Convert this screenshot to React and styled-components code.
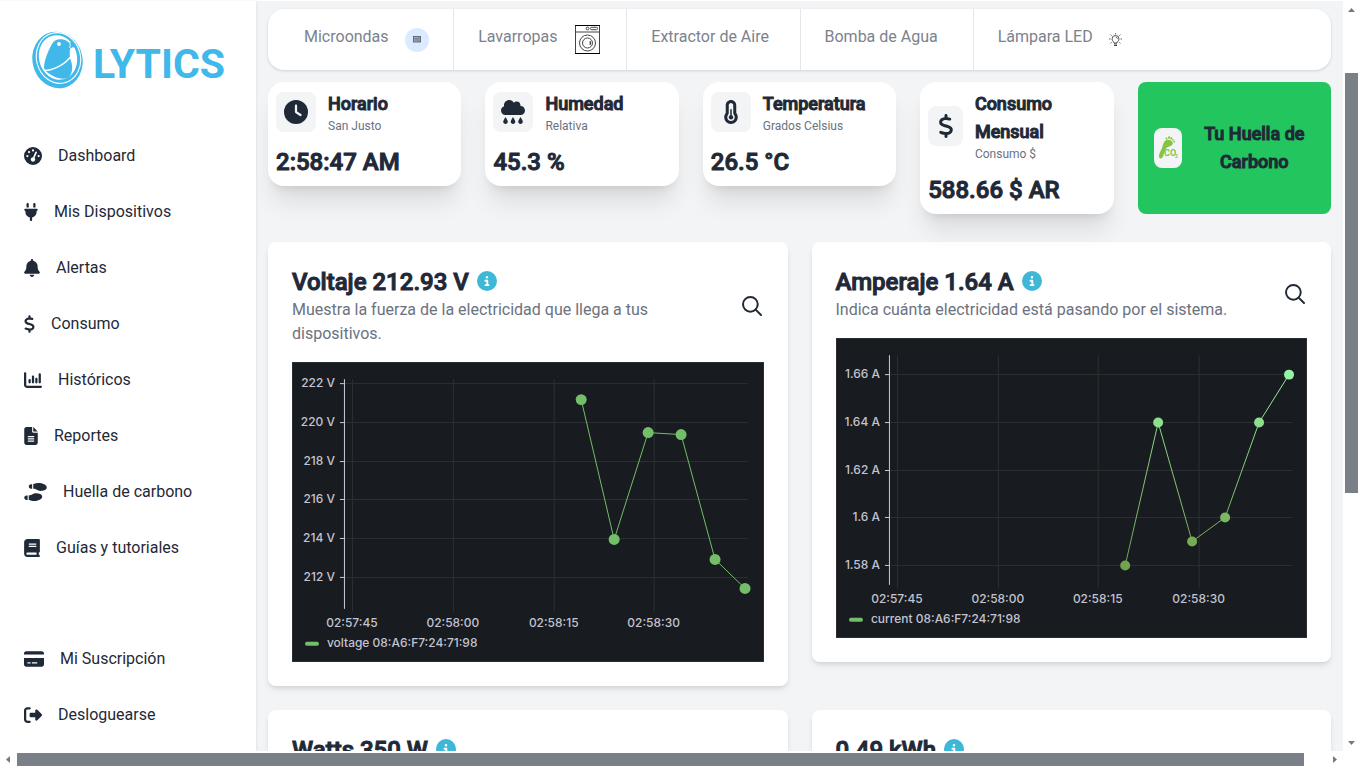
import React from "react";
import styled, { createGlobalStyle, css } from "styled-components";
import {
  FaGaugeHigh,
  FaPlug,
  FaBell,
  FaDollarSign,
  FaChartColumn,
  FaFileLines,
  FaShoePrints,
  FaBook,
  FaCreditCard,
  FaRightFromBracket,
  FaClock,
  FaCloudRain,
  FaTemperatureHalf,
  FaCircleInfo,
} from "react-icons/fa6";
import { IoSearchOutline } from "react-icons/io5";

const ink = "#1f2937";
const muted = "#6b7280";
const surface = "#f3f4f6";
const brand = "#40b8ea";

const GlobalStyle = createGlobalStyle`
  *, *::before, *::after { box-sizing: border-box; }
  body {
    margin: 0;
    background: #fff;
    color: ${ink};
    font: 400 16px/24px Roboto, "Liberation Sans", sans-serif;
  }
  h2, h3, p, ul { margin: 0; padding: 0; }
  ul { list-style: none; }
  svg { display: block; flex: none; }
  button { border: 0; padding: 0; background: none; color: inherit; font: inherit; cursor: pointer; }
  a { color: inherit; text-decoration: none; }
`;

/* Medium letters thickened by an outline, so that widths stay those of the medium face. */
const heavy = css`
  font-weight: 500;
  -webkit-text-stroke: 1px currentColor;
`;

const Shell = styled.div`
  display: grid;
  grid-template-columns: 256px minmax(0, 1fr) 17px;
  grid-template-rows: minmax(0, 1fr) 17px;
  height: 100vh;
  padding-top: 1px;
  overflow: hidden;
`;

/* Sidebar */

const Sidebar = styled.aside`
  display: flex;
  flex-direction: column;
  background: #fff;
  box-shadow: 0 1px 3px rgba(0, 0, 0, 0.12);
  z-index: 1;
  padding-bottom: 8px;
`;

const Brand = styled.a`
  display: flex;
  align-items: center;
  gap: 9px;
  height: 127px;
  padding: 0 32px 10px;
`;

const Wordmark = styled.span`
  color: ${brand};
  font: 700 41px/48px Roboto, sans-serif;
  padding-top: 8px;
`;

const Menu = styled.ul`
  ${({ $grow }) => $grow && css`flex: 1;`}
`;

const MenuLink = styled.a`
  display: flex;
  align-items: center;
  gap: 16px;
  height: 56px;
  padding: 0 24px;

  svg {
    width: ${({ $icon }) => $icon}px;
    height: 18px;
  }
`;

/* Main area */

const Main = styled.main`
  overflow: hidden;
  padding: 8px 12px 0;
  background: ${surface};
`;

const DeviceBar = styled.nav`
  display: grid;
  grid-template-columns: repeat(6, minmax(0, 1fr));
  height: 61px;
  padding: 0 12px;
  border-radius: 16px;
  background: #fff;
  box-shadow: 0 1px 3px rgba(0, 0, 0, 0.15);
`;

const Device = styled.a`
  display: flex;
  align-items: center;
  gap: 16px;
  padding-left: 24px;
  color: #7c828d;
  white-space: nowrap;

  & + & {
    border-left: 1px solid #e5e7eb;
  }

  span {
    padding-bottom: 6px;
  }
`;

const RoundBadge = styled.i`
  display: grid;
  place-items: center;
  width: 24px;
  height: 24px;
  border-radius: 50%;
  background: #dbeafe;
`;

const Stats = styled.section`
  display: grid;
  grid-template-columns: repeat(5, minmax(0, 1fr));
  align-items: start;
  gap: 24px;
  margin: 12px 0 28px;
  position: relative;
  z-index: 1;
`;

const StatCard = styled.article`
  padding: 8px;
  border-radius: 16px;
  background: #fff;
  box-shadow: 0 20px 25px -5px rgba(0, 0, 0, 0.1), 0 8px 10px -6px rgba(0, 0, 0, 0.1);
`;

const StatHead = styled.header`
  display: flex;
  align-items: center;
  gap: 12px;
`;

const IconTile = styled.div`
  display: flex;
  align-items: center;
  justify-content: center;
  flex: ${({ $narrow }) => ($narrow ? "none" : "0 1 40px")};
  width: ${({ $narrow }) => ($narrow ? 28 : 40)}px;
  min-width: 0;
  height: 40px;
  border-radius: 8px;
  background: ${surface};

  > svg {
    width: auto;
    height: 24px;
  }
`;

const StatTitle = styled.h3`
  ${heavy}
  font-size: 18px;
  line-height: 28px;
`;

const StatNote = styled.p`
  color: ${muted};
  font-size: 12px;
  line-height: 16px;
`;

const StatValue = styled.p`
  ${heavy}
  margin-top: 12px;
  font-size: 24px;
  line-height: 32px;
`;

const FootprintButton = styled.button`
  display: flex;
  align-items: center;
  align-self: stretch;
  gap: 12px;
  && {
    padding: 0 16px;
  }
  border-radius: 8px;
  background: #22c55e;

  span {
    ${heavy}
    flex: 1;
    font-size: 18px;
    line-height: 28px;
  }
`;

const Panels = styled.section`
  display: grid;
  grid-template-columns: repeat(2, minmax(0, 1fr));
  align-items: start;
  gap: 24px;
`;

const Panel = styled.article`
  padding: 24px;
  border-radius: 8px;
  background: #fff;
  box-shadow: 0 4px 6px -1px rgba(0, 0, 0, 0.1), 0 2px 4px -2px rgba(0, 0, 0, 0.1);
`;

const PanelHead = styled.header`
  display: flex;
  align-items: center;
  justify-content: space-between;
  margin-bottom: 16px;
`;

const PanelTitle = styled.h2`
  ${heavy}
  display: flex;
  align-items: center;
  gap: 8px;
  font-size: 24px;
  line-height: 32px;
`;

const InfoButton = styled.button`
  && {
    padding-bottom: 2px;
    color: #3fb8d8;
    font-size: 20px;
  }
`;

const PanelNote = styled.p`
  color: ${muted};
`;

const ZoomButton = styled.button`
  && {
    font-size: 24px;
  }

  path {
    stroke-width: 42px;
  }
`;

const ChartFrame = styled.svg`
  width: 100%;
  height: 300px;
  background: #181b1f;
  border: 1px solid #2a2d31;

  text {
    fill: #c3c3d2;
    font: 500 12px Inter, sans-serif;
  }
`;

/* Scroll bars */

const Track = styled.div`
  display: flex;
  align-items: center;
  justify-content: space-between;
  background: #fff;
  z-index: 2;
  ${({ $vertical }) =>
    $vertical
      ? css`
          flex-direction: column;
          padding: 6px 2px;
        `
      : css`
          grid-column: 1 / -1;
          padding: 2px 23px 2px 5px;
        `}
`;

const Rail = styled.div`
  display: flex;
  flex: 1;
  align-self: stretch;
  ${({ $vertical }) =>
    $vertical
      ? css`
          flex-direction: column;
          padding: 61px 0 0;
        `
      : css`
          padding: 0 28px 0 7px;
        `}
`;

const Thumb = styled.div`
  flex: 0 0 ${({ $size }) => $size};
  background: #7a8087;
`;

const arrows = {
  up: "M0 5L3.5 1L7 5Z",
  down: "M0 1L3.5 5L7 1Z",
  left: "M5 0L1 3.5L5 7Z",
  right: "M1 0L5 3.5L1 7Z",
};

function Arrow({ dir }) {
  const vertical = dir === "up" || dir === "down";
  return (
    <svg width={vertical ? 7 : 5} height={vertical ? 5 : 7} aria-hidden="true">
      <path d={arrows[dir]} fill="#747a85" />
    </svg>
  );
}

/* Drawings */

function BirdLogo() {
  return (
    <svg width="52" height="58" viewBox="0 0 52 58" aria-hidden="true">
      <ellipse cx="25.5" cy="29" rx="25" ry="28.5" transform="rotate(-14 25.5 29)" fill={brand} />
      <ellipse cx="26.5" cy="27" rx="22" ry="25.500" transform="rotate(-14 26.5 27)" fill="none" stroke="#fff" strokeWidth="1.1" />
      <ellipse cx="26" cy="26.5" rx="19" ry="22.5" transform="rotate(-14 26 26.5)" fill="#fff" />
      <path
        d="M20 13C22 9 26 7.500 31 8.500C34 9 36 11 38 11.500C42 11 44 14 44.500 17C42 15.500 39.500 16 38 18C37.500 23 37.500 26 39 30C41 36 40.500 42 37 46C34 48.500 27 48 22 45.500C17 43 13 40 12 37C12 30 16 20 20 13Z"
        fill={brand}
      />
      <path d="M12 39.500C22 39.500 33 33 38.500 26" fill="none" stroke="#fff" strokeWidth="1.300" />
      <circle cx="27" cy="13" r="1.900" fill="#fff" />
      <path d="M36 10C38 12 39 14 37.500 17" fill="none" stroke="#fff" strokeWidth="0.900" />
    </svg>
  );
}

function MicrowaveIcon() {
  return (
    <svg width="8" height="7" viewBox="0 0 8 7" aria-hidden="true">
      <rect x="0.500" y="0.500" width="7" height="5.500" fill="#a6b0bf" stroke="#4b5563" strokeWidth="0.800" />
      <path d="M1.500 2.500H5M1.500 4H5M6 1V6" stroke="#4b5563" strokeWidth="0.600" />
    </svg>
  );
}

function WasherIcon() {
  return (
    <svg width="29" height="29" viewBox="-2 0 29 29" fill="none" stroke="#444" aria-hidden="true">
      <path d="M0.500 0.500H24.500V28.500H0.500Z" />
      <path d="M0 0.500H25M0 28.500H25" stroke="#000" />
      <path d="M1 7H24" />
      <circle cx="12.500" cy="3.500" r="1.400" />
      <rect x="15.500" y="2.300" width="7" height="2.400" rx="1" />
      <circle cx="12.500" cy="18" r="8" />
      <circle cx="12.500" cy="18" r="5" />
      <path d="M15 16Q17 18 15 20Z" fill="#222" strokeWidth="0.600" />
    </svg>
  );
}

function LampIcon() {
  return (
    <svg width="13" height="14" viewBox="0 0 13 14" fill="none" stroke="#444" strokeWidth="0.900" aria-hidden="true">
      <path d="M5 10C5 8.500 3 8 3 6A3.500 3.500 0 0 1 10 6C10 8 8 8.500 8 10Z" />
      <path d="M5 11H8M5 12.500H8" strokeWidth="1.200" />
      <path d="M6.500 0V1.500M0 6H1.500M11.500 6H13M1.500 1.500L2.700 2.700M11.500 1.500L10.300 2.700M1.500 10.500L2.700 9.300M11.500 10.500L10.300 9.300" strokeWidth="0.800" />
      <path d="M6.500 4Q8.300 4.200 8.500 6" strokeWidth="0.700" />
    </svg>
  );
}

function FootprintIcon() {
  return (
    <svg width="20" height="24" viewBox="0 0 20 24" fill="#84c440" aria-hidden="true">
      <path d="M7 5C9 3 13 3.500 14.500 6C15.500 9 13 10 10 11C7 12.500 7 15 5.500 19C5 22.500 1 24 1 20C1 17 3 15 4 12C5 9 5 7 7 5Z" />
      <circle cx="8.500" cy="2.400" r="1" />
      <ellipse cx="11" cy="1.600" rx="1" ry="1.400" />
      <ellipse cx="13.200" cy="2.300" rx="0.900" ry="1.200" />
      <circle cx="15" cy="3.800" r="0.900" />
      <circle cx="16.300" cy="5.700" r="0.900" />
      <text x="6" y="20" fontFamily="Roboto, sans-serif" fontWeight="700" fontSize="9">CO</text>
      <text x="17" y="22" fontFamily="Roboto, sans-serif" fontWeight="700" fontSize="5">2</text>
    </svg>
  );
}

function LineChart({ id, name, axisX, rows, columns, points, gradient }) {
  const stroke = gradient ? `url(#${id})` : "#73bf69";
  const right = axisX + 404;
  return (
    <ChartFrame viewBox="1 1 470 298" role="img" aria-label={name}>
      {gradient && (
        <defs>
          <linearGradient id={id} gradientUnits="userSpaceOnUse" x1="0" y1="36" x2="0" y2="228">
            <stop offset="0" stopColor="#96f2a6" />
            <stop offset="1" stopColor="#73a24c" />
          </linearGradient>
        </defs>
      )}
      {rows.map(([label, y]) => (
        <React.Fragment key={label}>
          <path d={`M${axisX} ${y + 0.5}H${right}`} stroke="#2d3134" />
          <path d={`M${axisX - 4} ${y + 0.5}H${axisX}`} stroke="#ccccdc" />
          <text x={axisX - 9} y={y + 4} textAnchor="end">{label}</text>
        </React.Fragment>
      ))}
      {columns.map(([label, x]) => (
        <React.Fragment key={label}>
          <path d={`M${x + 0.5} 17V250`} stroke="#2d3134" />
          <text x={x} y="265" textAnchor="middle">{label}</text>
        </React.Fragment>
      ))}
      <path d={`M${axisX + 0.5} 17V247`} stroke="#ccccdc" />
      <polyline points={points.map((p) => p.join(",")).join(" ")} fill="none" stroke={stroke} />
      {points.map(([x, y]) => (
        <circle key={x} cx={x} cy={y} r={gradient ? 5 : 5.5} fill={gradient ? shade(y) : stroke} />
      ))}
      <rect x="13" y="280" width="14" height="4" rx="2" fill="#73bf69" />
      <text x="35" y="285">{name}</text>
    </ChartFrame>
  );
}

/* One flat colour per point, from pale green at the top of the scale to olive at its foot. */
function shade(y) {
  const t = (y - 36) / 192;
  const mix = (a, b) => Math.round(a + (b - a) * t);
  return `rgb(${mix(150, 115)}, ${mix(242, 162)}, ${mix(166, 76)})`;
}

/* Content */

const mainMenu = [
  ["Dashboard", FaGaugeHigh, 18],
  ["Mis Dispositivos", FaPlug, 14],
  ["Alertas", FaBell, 16],
  ["Consumo", FaDollarSign, 11],
  ["Históricos", FaChartColumn, 18],
  ["Reportes", FaFileLines, 14],
  ["Huella de carbono", FaShoePrints, 23],
  ["Guías y tutoriales", FaBook, 16],
];

const accountMenu = [
  ["Mi Suscripción", FaCreditCard, 20],
  ["Desloguearse", FaRightFromBracket, 18],
];

const stats = [
  ["Horario", "San Justo", "2:58:47 AM", FaClock],
  ["Humedad", "Relativa", "45.3 %", FaCloudRain],
  ["Temperatura", "Grados Celsius", "26.5 °C", FaTemperatureHalf],
  ["Consumo Mensual", "Consumo $", "588.66 $ AR", FaDollarSign],
];

const voltage = {
  id: "voltage",
  name: "voltage 08:A6:F7:24:71:98",
  axisX: 52,
  rows: [["222 V", 21], ["220 V", 60], ["218 V", 99], ["216 V", 137], ["214 V", 176], ["212 V", 215]],
  columns: [["02:57:45", 60], ["02:58:00", 161], ["02:58:15", 262], ["02:58:30", 362]],
  points: [[289.5, 37.5], [322.5, 177.5], [356.5, 70.5], [389.5, 72.5], [423.5, 197.5], [453.5, 226.5]],
};

const current = {
  id: "current",
  name: "current 08:A6:F7:24:71:98",
  gradient: true,
  axisX: 53,
  rows: [["1.66 A", 36], ["1.64 A", 84], ["1.62 A", 132], ["1.6 A", 179], ["1.58 A", 227]],
  columns: [["02:57:45", 61], ["02:58:00", 162], ["02:58:15", 262], ["02:58:30", 363]],
  points: [[289.5, 227.5], [322.5, 84.5], [356.5, 203.5], [389.5, 179.5], [423.5, 84.5], [453.5, 36.5]],
};

function MenuList({ items, grow }) {
  return (
    <Menu $grow={grow}>
      {items.map(([label, Icon, width]) => (
        <li key={label}>
          <MenuLink href="#" $icon={width}>
            <Icon aria-hidden="true" />
            {label}
          </MenuLink>
        </li>
      ))}
    </Menu>
  );
}

function Reading({ title, note, chart }) {
  return (
    <Panel>
      <PanelHead>
        <div>
          <PanelTitle>
            {title}
            <InfoButton aria-label="Información">
              <FaCircleInfo />
            </InfoButton>
          </PanelTitle>
          {note && <PanelNote>{note}</PanelNote>}
        </div>
        {chart && (
          <ZoomButton aria-label="Ampliar">
            <IoSearchOutline />
          </ZoomButton>
        )}
      </PanelHead>
      {chart && <LineChart {...chart} />}
    </Panel>
  );
}

export default function App() {
  return (
    <>
      <GlobalStyle />
      <Shell>
        <Sidebar>
          <Brand href="#">
            <BirdLogo />
            <Wordmark>LYTICS</Wordmark>
          </Brand>
          <MenuList items={mainMenu} grow />
          <MenuList items={accountMenu} />
        </Sidebar>

        <Main>
          <DeviceBar>
            <Device href="#">
              <span>Microondas</span>
              <RoundBadge><MicrowaveIcon /></RoundBadge>
            </Device>
            <Device href="#">
              <span>Lavarropas</span>
              <WasherIcon />
            </Device>
            <Device href="#"><span>Extractor de Aire</span></Device>
            <Device href="#"><span>Bomba de Agua</span></Device>
            <Device href="#">
              <span>Lámpara LED</span>
              <LampIcon />
            </Device>
          </DeviceBar>

          <Stats>
            {stats.map(([title, note, value, Icon]) => (
              <StatCard key={title}>
                <StatHead>
                  <IconTile><Icon aria-hidden="true" /></IconTile>
                  <div>
                    <StatTitle>{title}</StatTitle>
                    <StatNote>{note}</StatNote>
                  </div>
                </StatHead>
                <StatValue>{value}</StatValue>
              </StatCard>
            ))}
            <FootprintButton>
              <IconTile $narrow><FootprintIcon /></IconTile>
              <span>Tu Huella de Carbono</span>
            </FootprintButton>
          </Stats>

          <Panels>
            <Reading
              title="Voltaje 212.93 V"
              note="Muestra la fuerza de la electricidad que llega a tus dispositivos."
              chart={voltage}
            />
            <Reading
              title="Amperaje 1.64 A"
              note="Indica cuánta electricidad está pasando por el sistema."
              chart={current}
            />
            <Reading title="Watts 350 W" />
            <Reading title="0.49 kWh" />
          </Panels>
        </Main>

        <Track $vertical>
          <Arrow dir="up" />
          <Rail $vertical><Thumb $size="63%" /></Rail>
          <Arrow dir="down" />
        </Track>
        <Track>
          <Arrow dir="left" />
          <Rail><Thumb $size="100%" /></Rail>
          <Arrow dir="right" />
        </Track>
      </Shell>
    </>
  );
}
